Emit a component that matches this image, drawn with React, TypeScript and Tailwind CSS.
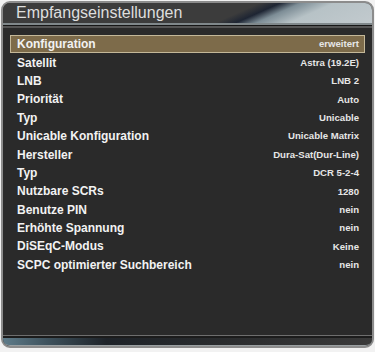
export default function App() {
  const rows = [
    { label: "Konfiguration", value: "erweitert" },
    { label: "Satellit", value: "Astra (19.2E)" },
    { label: "LNB", value: "LNB 2" },
    { label: "Priorität", value: "Auto" },
    { label: "Typ", value: "Unicable" },
    { label: "Unicable Konfiguration", value: "Unicable Matrix" },
    { label: "Hersteller", value: "Dura-Sat(Dur-Line)" },
    { label: "Typ", value: "DCR 5-2-4" },
    { label: "Nutzbare SCRs", value: "1280" },
    { label: "Benutze PIN", value: "nein" },
    { label: "Erhöhte Spannung", value: "nein" },
    { label: "DiSEqC-Modus", value: "Keine" },
    { label: "SCPC optimierter Suchbereich", value: "nein" },
  ];

  return (
    <div className="h-[352px] w-[375px] bg-[#f2f2f2] px-[1px] pt-[1px] font-['Liberation_Sans',Arial,sans-serif]">
      <div className="flex h-[347px] flex-col overflow-hidden rounded-[9px] border-2 border-[#8c8c8c] bg-[#2a2a2a]">
        {/* title bar */}
        <div className="flex h-[20px] items-center bg-[linear-gradient(156deg,#3c3c3c_0%,#3c3c3c_62%,#1e2533_67%,#7d8d96_72%,#b7c2c6_80%,#c2cace_100%)] pl-[13px]">
          <span className="text-[16px] leading-none text-[#dedede]">Empfangseinstellungen</span>
        </div>
        <div className="h-[2px] bg-[#80888b]" />
        <div className="h-[1px] bg-[#161616]" />
        <div className="h-[2px] bg-[#555555]" />

        {/* list */}
        <div className="flex-1 px-[7px] pt-[7px]">
          {rows.map((r, i) => (
            <div
              key={i}
              className={
                i === 0
                  ? "flex h-[18.4px] items-center justify-between border border-[#c4b899] bg-[#7d6b4a] pl-[6px] pr-[5px]"
                  : "flex h-[18.4px] items-center justify-between border border-transparent pl-[6px] pr-[5px]"
              }
            >
              <span className="text-[12px] font-bold leading-none text-[#f2f2f2]">{r.label}</span>
              <span className="text-[9.6px] font-bold leading-none text-[#e6e6e6]">{r.value}</span>
            </div>
          ))}
        </div>

        {/* bottom bar */}
        <div className="h-[1px] bg-[#6e6e6e]" />
        <div className="h-[2px] bg-[#1c1c1c]" />
        <div className="h-[8px] rounded-b-[6px] border-b border-[#9aa0a2] bg-[linear-gradient(90deg,#5f7c8a_0%,#3e525d_12%,#1e2329_28%,#2a2c2e_60%,#3a3a3a_100%)]" />
      </div>
    </div>
  );
}
